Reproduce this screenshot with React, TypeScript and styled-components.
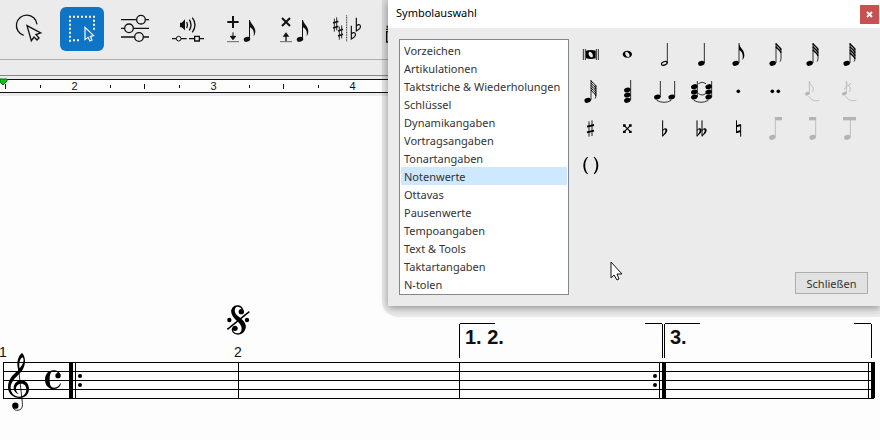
import React, { useState } from "react";
import styled, { createGlobalStyle, css } from "styled-components";

const GlobalStyle = createGlobalStyle`
  * { box-sizing: border-box; }
  body {
    margin: 0;
    background: #fdfdfd;
    font-family: "Noto Sans", "Segoe UI", sans-serif;
    font-size: 11px;
    color: #333;
  }
`;

const ui = {
  face: "#ebebeb",
  accent: "#0d74c6",
  select: "#cde8ff",
  border: "#828790",
};

const Page = styled.main`
  position: relative;
  min-height: 100vh;
  overflow: hidden;
  background: #fdfdfd;
`;

const Toolbar = styled.div`
  display: flex;
  gap: 9px;
  height: 60px;
  padding: 7px;
  overflow: hidden;
  background: ${ui.face};
  border-bottom: 1px solid #adadad;
`;

const ToolButton = styled.button<{ $active?: boolean }>`
  flex: none;
  width: 44px;
  height: 44px;
  padding: 0;
  border: 0;
  border-radius: 6px;
  background: transparent;
  color: #111;
  ${(p) =>
    p.$active &&
    css`
      background: ${ui.accent};
      color: #fff;
    `}
  svg { display: block; width: 100%; height: 100%; }
`;

const SubBar = styled.div`
  height: 16px;
  background: ${ui.face};
  border-bottom: 1px solid #85858f;
`;

const RulerFrame = styled.div`
  padding: 3px 0;
  background: ${ui.face};
`;

const Ruler = styled.div`
  display: flex;
  height: 14px;
  overflow: hidden;
  background: #fdfdfd;
  border: solid #111;
  border-width: 1px 0;
`;

const Bar = styled.div`
  flex: none;
  display: grid;
  grid-template-columns: 35px 35px 35px 34px;
  justify-items: center;
  align-items: center;
  width: 139px;
  &:first-child { margin-left: -12px; }
`;

const Tick = styled.span<{ $long?: boolean }>`
  width: 1px;
  height: ${(p) => (p.$long ? 5 : 3)}px;
  background: #111;
`;

const BarNumber = styled.span`
  padding-right: 2px;
  font: 11px/12px "Liberation Sans", Arial, sans-serif;
  color: #111;
`;

const Playhead = styled.svg`
  position: absolute;
  left: 0;
  top: 78px;
  width: 8px;
  height: 8px;
`;

const ScoreArea = styled.section`
  padding-top: 203px;
  overflow: hidden;
  svg { display: block; width: 880px; height: 140px; }
`;

const DialogHalo = styled.div`
  position: absolute;
  top: 0;
  right: 0;
  left: 382px;
  padding: 0 0 11px 6px;
  border-bottom-left-radius: 16px;
  background: rgba(0, 0, 0, 0.07);
`;

const Dialog = styled.section`
  background: ${ui.face};
  box-shadow: 0 2px 8px rgba(0, 0, 0, 0.4);
`;

const TitleBar = styled.header`
  display: flex;
  align-items: center;
  justify-content: space-between;
  height: 28px;
  padding: 0 1px 0 8px;
  background: #fff;
`;

const Title = styled.h1`
  margin: 0;
  padding-bottom: 2px;
  font-size: 11px;
  line-height: 26px;
  font-weight: 400;
  color: #000;
`;

const CloseButton = styled.button`
  width: 19px;
  height: 19px;
  padding: 0;
  border: 0;
  background: #c75050;
  color: #fff;
  svg { display: block; margin: auto; }
`;

const DialogBody = styled.div`
  display: grid;
  grid-template-columns: 170px 1fr;
  gap: 3px;
  padding: 11px 12px 11px 11px;
`;

const CategoryList = styled.select`
  width: 100%;
  height: 256px;
  padding: 1px;
  border: 1px solid ${ui.border};
  border-radius: 0;
  outline: 0;
  overflow: hidden;
  background: #fff;
  font: inherit;
  color: #333;
  scrollbar-width: none;
`;

const Category = styled.option`
  height: 18px;
  min-height: 18px;
  padding: 2px 3px 0;
  line-height: 18px;
  color: #333;
  &:checked { background: ${ui.select} linear-gradient(${ui.select}, ${ui.select}); color: #333; }
`;

const SymbolPane = styled.div`
  display: flex;
  flex-direction: column;
  justify-content: space-between;
`;

const SymbolGrid = styled.div`
  display: grid;
  grid-template-columns: repeat(8, 37px);
  grid-auto-rows: 37px;
  margin-top: -2px;
`;

const SymbolButton = styled.button`
  padding: 0;
  border: 0;
  background: transparent;
  color: #000;
  &:disabled { color: #b4b4b4; }
  svg { display: block; width: 37px; height: 37px; }
`;

const DialogActions = styled.div`
  display: flex;
  justify-content: flex-end;
  padding-bottom: 1px;
`;

const PushButton = styled.button`
  width: 73px;
  height: 22px;
  padding: 0;
  border: 1px solid #adadad;
  background: #e1e1e1;
  font: inherit;
  color: #333;
`;

const Pointer = styled.svg`
  position: absolute;
  left: 610px;
  top: 261px;
  width: 13px;
  height: 21px;
`;

/* ---------- toolbar drawings, three units to the pixel ---------- */

const EighthNote = ({ x }: { x: number }) => (
  <g transform={`translate(${x} 0)`} fill="currentColor">
    <ellipse cx="0" cy="118" rx="10" ry="7" transform="rotate(-18 0 118)" />
    <path d="M6 60 H9 C11 73 25 78 25 94 C25 99 23 105 20 109 C22 97 20 88 9 82 V118 H6 Z" />
  </g>
);

type Tool = { label: string; box: string; art: React.ReactNode };

const tools: Tool[] = [
  {
    label: "Objektauswahl",
    box: "21 21 132 132",
    art: (
      <>
        <path d="M71 106 A31 31 0 1 1 111 73" fill="none" stroke="currentColor" strokeWidth="4" />
        <path d="M81 77 L94 122 L102 111 L111 120 L117 114 L108 104 L122 99 Z" fill="none" stroke="currentColor" strokeWidth="4" />
      </>
    ),
  },
  {
    label: "Bereichsauswahl",
    box: "180 21 132 132",
    art: (
      <>
        <path d="M207 50 H287" fill="none" stroke="currentColor" strokeWidth="6" strokeDasharray="6 6" />
        <path d="M210 59 V125" stroke="currentColor" strokeWidth="6" strokeDasharray="6 6" />
        <path d="M282 59 V92" stroke="currentColor" strokeWidth="6" strokeDasharray="6 6" />
        <path d="M219 121 H238" stroke="currentColor" strokeWidth="6" strokeDasharray="6 6" />
        <path d="M255 82 V119 L264 112 L270 123 L276 120 L271 109 L281 107 Z" fill="none" stroke="currentColor" strokeWidth="3.5" />
      </>
    ),
  },
  {
    label: "Einstellungen",
    box: "339 21 132 132",
    art: (
      <g fill="none" stroke="currentColor" strokeWidth="4">
        <path d="M363 59 H409 M437 59 H447 M363 85 H373 M401 85 H447 M363 111 H403 M431 111 H447" />
        <circle cx="423" cy="59" r="13" />
        <circle cx="387" cy="85" r="13" />
        <circle cx="417" cy="111" r="13" />
      </g>
    ),
  },
  {
    label: "Wiedergabe",
    box: "498 21 132 132",
    art: (
      <>
        <path d="M540 68 H545 L555 58 V91 L545 82 H540 Z" fill="currentColor" />
        <g fill="none" stroke="currentColor" strokeWidth="4">
          <path d="M560 66 Q565 75 560 84 M568 59 Q578 75 568 91 M577 53 Q593 75 577 97" />
          <path d="M516 116 H529 M543 116 H560 M567 116 H583 M598 116 H612" />
          <circle cx="536" cy="116" r="7" strokeWidth="3" />
          <path d="M584 109 H598 V123 H584 Z" />
        </g>
      </>
    ),
  },
  {
    label: "Note einfügen",
    box: "57 21 132 132",
    art: (
      <>
        <path d="M82 66 H116 M99 48 V84" stroke="currentColor" strokeWidth="6" />
        <path d="M99 97 V111 M91 109 H107 L99 119 Z" stroke="currentColor" strokeWidth="3" fill="currentColor" />
        <path d="M81 125 H117" stroke="#666" strokeWidth="3" />
        <EighthNote x={141} />
      </>
    ),
  },
  {
    label: "Note löschen",
    box: "216 21 132 132",
    art: (
      <>
        <path d="M246 54 L270 78 M270 54 L246 78" stroke="currentColor" strokeWidth="6" />
        <path d="M258 124 V108" stroke="currentColor" strokeWidth="4" />
        <path d="M248 110 H268 L258 97 Z" fill="currentColor" />
        <path d="M240 125 H276" stroke="#666" strokeWidth="3" />
        <EighthNote x={300} />
      </>
    ),
  },
  {
    label: "Enharmonik",
    box: "375 21 132 132",
    art: (
      <g fill="none" stroke="currentColor" strokeWidth="2.6">
        <path d="M403 56 V95 M410 52 V91 M418 80 V119 M425 76 V115" />
        <path d="M399 69 L415 64 M399 84 L415 79 M414 93 L429 88 M414 108 L429 103" strokeWidth="5" />
        <path d="M440 46 V126" strokeDasharray="3 2" />
        <path d="M454 77 V117 C463 112 468 106 466 101 C464 95 456 98 454 103 M469 53 V93 C478 88 483 82 481 77 C479 71 471 74 469 79" strokeWidth="3.6" />
      </g>
    ),
  },
  {
    label: "Layout",
    box: "534 21 132 132",
    art: <path d="M560 128 V95 H590 M560 126 H590 M558 88 H570 M562 77 V83" fill="none" stroke="currentColor" strokeWidth="4" />,
  },
];

/* ---------- palette drawings, 111 x 111 units per cell ---------- */

const Head = ({ x, y = 79 }: { x: number; y?: number }) => (
  <ellipse cx={x} cy={y} rx="10" ry="7" transform={`rotate(-18 ${x} ${y})`} fill="currentColor" />
);

const Stem = ({ x, top = 18, bottom = 78 }: { x: number; top?: number; bottom?: number }) => (
  <path d={`M${x} ${top} V${bottom}`} stroke="currentColor" strokeWidth="2.4" />
);

const FlaggedNote = ({ flags }: { flags: number }) => {
  const step = flags > 4 ? 7 : 9;
  return (
    <>
      <Head x={47} />
      <Stem x={57} />
      {flags === 1 ? (
        <path d="M57 18 C58 32 73 38 73 54 C73 60 71 65 67 69 C70 57 69 45 57 39 Z" fill="currentColor" />
      ) : (
        <>
          {Array.from({ length: flags }, (_, i) => (
            <path
              key={i}
              d={`M57 ${20 + i * step} C60 ${27 + i * step} 69 ${28 + i * step} 72 ${38 + i * step}`}
              fill="none"
              stroke="currentColor"
              strokeWidth={flags > 4 ? 3 : 4.5}
            />
          ))}
          <path d="M72 34 V64 Q72 70 69 74" fill="none" stroke="currentColor" strokeWidth="2.4" />
        </>
      )}
    </>
  );
};

const Curve = ({ d }: { d: string }) => <path d={d} fill="none" stroke="currentColor" strokeWidth="2.4" />;

const Flat = ({ x }: { x: number }) => (
  <>
    <path d={`M${x} 28 V76`} stroke="currentColor" strokeWidth="3" />
    <path
      d={`M${x} 57 C${x + 5} 50 ${x + 14} 50 ${x + 14} 58 C${x + 14} 66 ${x + 6} 71 ${x} 77 V72 C${x + 5} 67 ${x + 8} 63 ${x + 8} 59 C${x + 8} 54 ${x + 4} 55 ${x} 61 Z`}
      fill="currentColor"
    />
  </>
);

const GraceNote = ({ slashed }: { slashed?: boolean }) => (
  <>
    <ellipse cx="40" cy="59" rx="7" ry="5" transform="rotate(-18 40 59)" fill="currentColor" />
    <Stem x={46} top={21} bottom={59} />
    <Curve d="M46 23 C48 33 58 36 58 46 Q58 50 55 54" />
    <Curve d="M44 66 C50 78 62 83 76 79" />
    {slashed && <Curve d="M38 46 L61 27" />}
  </>
);

type SymbolDef = { label: string; disabled?: boolean; art: React.ReactNode };

const symbols: SymbolDef[] = [
  {
    label: "Brevis",
    art: (
      <>
        <path d="M34 36 V69 M40 36 V69 M73 36 V69 M79 36 V69" stroke="currentColor" strokeWidth="2.4" />
        <path fillRule="evenodd" d="M42 41 Q56 37 71 41 V64 Q56 68 42 64 Z M52 44 C46 49 53 62 60 61 C67 58 60 43 52 44 Z" fill="currentColor" />
      </>
    ),
  },
  {
    label: "Ganze Note",
    art: <path fillRule="evenodd" d="M41 52 A14 10.5 0 1 1 69 52 A14 10.5 0 1 1 41 52 Z M51 44 C45 48 52 61 59 60 C66 57 59 43 51 44 Z" fill="currentColor" />,
  },
  {
    label: "Halbe Note",
    art: (
      <>
        <ellipse cx="55" cy="79" rx="9" ry="5" transform="rotate(-22 55 79)" fill="none" stroke="currentColor" strokeWidth="3.6" />
        <Stem x={64} />
      </>
    ),
  },
  { label: "Viertelnote", art: <><Head x={55} /><Stem x={64} /></> },
  { label: "Achtelnote", art: <FlaggedNote flags={1} /> },
  { label: "Sechzehntelnote", art: <FlaggedNote flags={2} /> },
  { label: "Zweiunddreißigstelnote", art: <FlaggedNote flags={3} /> },
  { label: "Vierundsechzigstelnote", art: <FlaggedNote flags={4} /> },
  { label: "Hundertachtundzwanzigstelnote", art: <FlaggedNote flags={5} /> },
  { label: "Akkord", art: <><Head x={55} y={48} /><Head x={55} y={63} /><Head x={55} /><Stem x={65} /></> },
  {
    label: "Haltebogen",
    art: (
      <>
        <Head x={34} y={69} /><Head x={77} y={69} />
        <Stem x={43} top={21} bottom={69} /><Stem x={86} top={21} bottom={69} />
        <Curve d="M32 79 Q54 91 76 79" />
      </>
    ),
  },
  {
    label: "Haltebögen am Akkord",
    art: (
      <>
        {[34, 77].map((x) => [38, 54, 69].map((y) => <Head key={`${x}-${y}`} x={x} y={y} />))}
        <Stem x={43} top={21} bottom={69} /><Stem x={86} top={21} bottom={69} />
        <Curve d="M46 29 Q57 20 69 29" />
        <Curve d="M46 58 Q57 68 69 58" />
        <Curve d="M32 79 Q54 91 76 79" />
      </>
    ),
  },
  { label: "Punktierung", art: <circle cx="55" cy="52" r="5.5" fill="currentColor" /> },
  {
    label: "Doppelpunktierung",
    art: <><circle cx="46" cy="52" r="5.5" fill="currentColor" /><circle cx="64" cy="52" r="5.5" fill="currentColor" /></>,
  },
  { label: "Vorschlag lang", disabled: true, art: <GraceNote /> },
  { label: "Vorschlag kurz", disabled: true, art: <GraceNote slashed /> },
  {
    label: "Kreuz",
    art: (
      <>
        <path d="M51 31 V77 M60 28 V75" stroke="currentColor" strokeWidth="2.6" />
        <path d="M45 47 L66 42 M45 64 L66 59" stroke="currentColor" strokeWidth="5.5" />
      </>
    ),
  },
  {
    label: "Doppelkreuz",
    art: (
      <>
        <path d="M46 44 L64 62 M64 44 L46 62" stroke="currentColor" strokeWidth="3.5" />
        <path d="M42 40 h8 v7 h-8 Z M60 40 h8 v7 h-8 Z M42 59 h8 v7 h-8 Z M60 59 h8 v7 h-8 Z" fill="currentColor" />
      </>
    ),
  },
  { label: "Be", art: <Flat x={50} /> },
  { label: "Doppel-Be", art: <><Flat x={42} /><Flat x={57} /></> },
  {
    label: "Auflöser",
    art: (
      <>
        <path d="M49.5 28 V66 M62 40 V77" stroke="currentColor" strokeWidth="3" />
        <path d="M49 46 L62 42 M49 64 L62 60" stroke="currentColor" strokeWidth="5.5" />
      </>
    ),
  },
  { label: "Balken beginnen", disabled: true, art: <><Head x={46} /><Stem x={55} /><path d="M54 18 H75 V28 H54 Z" fill="currentColor" /></> },
  { label: "Balken beenden", disabled: true, art: <><Head x={56} /><Stem x={65} /><path d="M45 18 H66 V28 H45 Z" fill="currentColor" /></> },
  { label: "Balken fortsetzen", disabled: true, art: <><Head x={49} /><Stem x={58} /><path d="M36 18 H75 V28 H36 Z" fill="currentColor" /></> },
  {
    label: "Klammern",
    art: (
      <path
        d="M46 26 C30 38 30 67 46 79 L48 77 C37 65 37 40 48 28 Z M67 26 C83 38 83 67 67 79 L65 77 C76 65 76 40 65 28 Z"
        fill="currentColor"
      />
    ),
  },
];

const categories = [
  "Vorzeichen",
  "Artikulationen",
  "Taktstriche & Wiederholungen",
  "Schlüssel",
  "Dynamikangaben",
  "Vortragsangaben",
  "Tonartangaben",
  "Notenwerte",
  "Ottavas",
  "Pausenwerte",
  "Tempoangaben",
  "Text & Tools",
  "Taktartangaben",
  "N-tolen",
];

/* ---------- engraved score ---------- */

const TrebleClef = () => (
  <g>
    <path
      fillRule="evenodd"
      d="M66 189 C58 194 52 208 52 222 C52 229 54 236 55 241 C38 254 24 270 24 292 C24 311 40 324 58 324 C76 324 87 312 87 297 C87 282 77 271 65 271 C51 271 41 281 41 294 C41 303 48 310 56 312 C50 307 48 302 48 297 C48 287 55 281 64 281 C73 281 79 288 79 298 C79 311 71 320 58 320 C43 320 32 308 32 293 C32 277 44 265 58 251 C68 242 75 229 75 213 C75 203 71 193 66 189 Z M67 202 C74 206 71 222 59 235 C56 222 59 207 67 202 Z"
    />
    <path d="M56 238 L67 338 C69 355 62 361 50 361 C46 361 42 358 40 354" fill="none" stroke="#000" strokeWidth="2.5" />
    <circle cx="46" cy="347" r="9.5" />
  </g>
);

const CommonTime = () => (
  <g>
    <path d="M182 257 C180 246 171 241 160 241 C146 241 135 252 135 269 C135 286 146 297 160 297 C172 297 180 291 183 281 L181 280 C178 288 171 293 163 293 C152 293 149 284 149 269 C149 254 152 244 161 244 C167 244 171 246 174 250 Z" />
    <circle cx="174" cy="257" r="8" />
  </g>
);

const Segno = () => (
  <g>
    <path
      d="M726 72 C732 63 727 49 714 48 C701 47 693 57 697 69 C701 82 731 88 734 108 C736 122 726 132 714 132 C701 132 694 123 698 114"
      fill="none"
      stroke="#000"
      strokeWidth="4"
    />
    <path d="M694 64 C695 88 716 90 724 110 C727 120 722 128 716 132 C731 130 739 119 737 106 C733 86 712 82 706 69 C702 59 706 52 712 48 C701 49 694 56 694 64 Z" />
    <circle cx="724" cy="65" r="8" />
    <circle cx="705" cy="115" r="8" />
    <path d="M682 118 L748 65" stroke="#000" strokeWidth="4.5" />
    <circle cx="688" cy="90" r="6.5" />
    <circle cx="741" cy="90" r="6.5" />
  </g>
);

const staffLines = [63, 72, 81, 90, 99];

const Score = () => (
  <svg viewBox="0 0 880 140" role="img" aria-label="Notensystem">
    <g shapeRendering="crispEdges">
      {staffLines.map((y) => (
        <rect key={y} x="3" y={y} width="871" height="1" />
      ))}
      {[3, 75, 238, 459, 659, 868].map((x) => (
        <rect key={x} x={x} y="63" width="1" height="37" />
      ))}
      {[69, 662, 871].map((x) => (
        <rect key={x} x={x} y="63" width="4" height="36" />
      ))}
      <path d="M459 59 V25 H460 V24 H495 V25 H460 V59 Z M645 24 H662 V25 H645 Z M662 25 H663 V59 H662 Z" />
      <path d="M664 25 H665 V59 H664 Z M665 24 H700 V25 H665 Z M854 24 H871 V25 H854 Z M871 25 H872 V59 H871 Z" />
    </g>
    {[80, 655].map((x) => (
      <g key={x}>
        <circle cx={x} cy="77" r="2" />
        <circle cx={x} cy="86" r="2" />
      </g>
    ))}
    <g transform="translate(0 -9) scale(0.333333)">
      <TrebleClef />
      <CommonTime />
      <Segno />
    </g>
    <g fontFamily='"Liberation Sans", Arial, sans-serif' fill="#111">
      <text x="-1" y="58" fontSize="14">1</text>
      <text x="234" y="58" fontSize="14">2</text>
      <text x="465" y="45" fontSize="20" fontWeight="700">1. 2.</text>
      <text x="670" y="45" fontSize="20" fontWeight="700">3.</text>
    </g>
  </svg>
);

export default function App() {
  const [category, setCategory] = useState("Notenwerte");
  const [tool, setTool] = useState("Bereichsauswahl");

  return (
    <>
      <GlobalStyle />
      <Page>
        <Toolbar role="toolbar" aria-label="Werkzeuge">
          {tools.map((t) => (
            <ToolButton key={t.label} aria-label={t.label} $active={t.label === tool} onClick={() => setTool(t.label)}>
              <svg viewBox={t.box}>{t.art}</svg>
            </ToolButton>
          ))}
        </Toolbar>
        <SubBar />
        <RulerFrame>
          <Ruler>
            {[2, 3, 4].map((bar) => (
              <Bar key={bar}>
                <Tick $long />
                <Tick />
                <BarNumber>{bar}</BarNumber>
                <Tick />
              </Bar>
            ))}
          </Ruler>
        </RulerFrame>
        <Playhead viewBox="0 0 8 8">
          <path d="M0 1 H7 V3 L3 7 L0 4 Z" fill="#00d000" stroke="#063" strokeWidth="1" />
        </Playhead>
        <ScoreArea>
          <Score />
        </ScoreArea>

        <DialogHalo>
          <Dialog role="dialog" aria-labelledby="dialog-title">
            <TitleBar>
              <Title id="dialog-title">Symbolauswahl</Title>
              <CloseButton aria-label="Fenster schließen">
                <svg width="7" height="7" viewBox="0 0 7 7">
                  <path d="M1 1 L6 6 M6 1 L1 6" stroke="currentColor" strokeWidth="1.8" />
                </svg>
              </CloseButton>
            </TitleBar>
            <DialogBody>
              <CategoryList size={14} aria-label="Kategorie" value={category} onChange={(e) => setCategory(e.target.value)}>
                {categories.map((name) => (
                  <Category key={name}>{name}</Category>
                ))}
              </CategoryList>
              <SymbolPane>
                <SymbolGrid>
                  {symbols.map((s) => (
                    <SymbolButton key={s.label} aria-label={s.label} disabled={s.disabled}>
                      <svg viewBox="0 0 111 111">{s.art}</svg>
                    </SymbolButton>
                  ))}
                </SymbolGrid>
                <DialogActions>
                  <PushButton>Schließen</PushButton>
                </DialogActions>
              </SymbolPane>
            </DialogBody>
          </Dialog>
        </DialogHalo>
        <Pointer viewBox="0 0 13 21">
          <path d="M1 1 V17 L4 14 L7 19 L9 18 L7 13 H12 Z" fill="#fff" stroke="#111" strokeWidth="1" />
        </Pointer>
      </Page>
    </>
  );
}
